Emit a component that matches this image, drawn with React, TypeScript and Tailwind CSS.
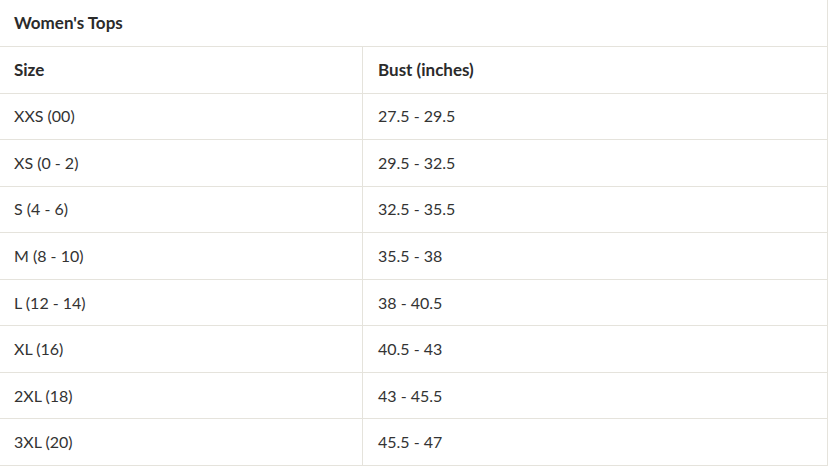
import React from "react";

const rows: [string, string][] = [
  ["XXS (00)", "27.5 - 29.5"],
  ["XS (0 - 2)", "29.5 - 32.5"],
  ["S (4 - 6)", "32.5 - 35.5"],
  ["M (8 - 10)", "35.5 - 38"],
  ["L (12 - 14)", "38 - 40.5"],
  ["XL (16)", "40.5 - 43"],
  ["2XL (18)", "43 - 45.5"],
  ["3XL (20)", "45.5 - 47"],
];

export default function App() {
  return (
    <div
      className="w-[829px] h-[466px] bg-white overflow-hidden"
      style={{ fontFamily: "Lato, 'Liberation Sans', sans-serif" }}
    >
      <div className="w-[828px] border-r border-[#e5e3dc]">
        <div className="h-[47px] flex items-center pl-[14px] pb-[1px] border-b border-[#e5e3dc] text-[17px] font-bold text-[#2b2b2b]">
          Women's Tops
        </div>
        <div className="grid grid-cols-[363px_1fr] h-[46.56px] border-b border-[#e5e3dc] text-[17px] font-bold text-[#2b2b2b]">
          <div className="flex items-center pl-[14px] pb-[1px] border-r border-[#e5e3dc]">Size</div>
          <div className="flex items-center pl-[15px] pb-[1px]">Bust (inches)</div>
        </div>
        {rows.map(([s, b]) => (
          <div
            key={s}
            className="grid grid-cols-[363px_1fr] h-[46.56px] border-b border-[#e5e3dc] text-[16px] text-[#333333]"
          >
            <div className="flex items-center pl-[14px] border-r border-[#e5e3dc]">{s}</div>
            <div className="flex items-center pl-[15px]">{b}</div>
          </div>
        ))}
      </div>
    </div>
  );
}
